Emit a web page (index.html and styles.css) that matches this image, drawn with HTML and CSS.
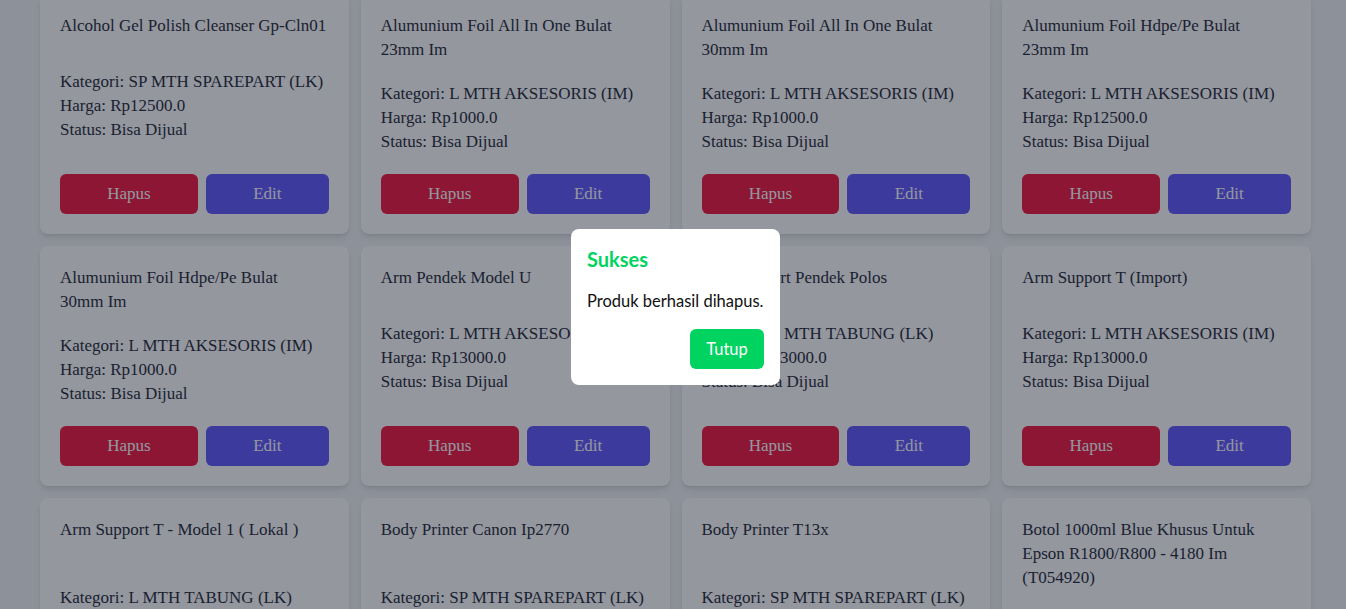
FILE: index.html
```html
<!DOCTYPE html>
<html lang="id">
<head>
<meta charset="utf-8">
<title>Produk</title>
<link rel="stylesheet" href="styles.css">
</head>
<body>
<main class="page">
  <div class="grid">
    <div class="card"><div class="title">Alcohol Gel Polish Cleanser Gp-Cln01</div><div class="info"><p>Kategori: SP MTH SPAREPART (LK)</p><p>Harga: Rp12500.0</p><p>Status: Bisa Dijual</p></div><div class="actions"><button class="btn btn-del">Hapus</button><button class="btn btn-edit">Edit</button></div></div>
    <div class="card"><div class="title">Alumunium Foil All In One Bulat 23mm&nbsp;Im</div><div class="info"><p>Kategori: L MTH AKSESORIS (IM)</p><p>Harga: Rp1000.0</p><p>Status: Bisa Dijual</p></div><div class="actions"><button class="btn btn-del">Hapus</button><button class="btn btn-edit">Edit</button></div></div>
    <div class="card"><div class="title">Alumunium Foil All In One Bulat 30mm&nbsp;Im</div><div class="info"><p>Kategori: L MTH AKSESORIS (IM)</p><p>Harga: Rp1000.0</p><p>Status: Bisa Dijual</p></div><div class="actions"><button class="btn btn-del">Hapus</button><button class="btn btn-edit">Edit</button></div></div>
    <div class="card"><div class="title">Alumunium Foil Hdpe/Pe Bulat 23mm&nbsp;Im</div><div class="info"><p>Kategori: L MTH AKSESORIS (IM)</p><p>Harga: Rp12500.0</p><p>Status: Bisa Dijual</p></div><div class="actions"><button class="btn btn-del">Hapus</button><button class="btn btn-edit">Edit</button></div></div>

    <div class="card"><div class="title">Alumunium Foil Hdpe/Pe Bulat 30mm&nbsp;Im</div><div class="info"><p>Kategori: L MTH AKSESORIS (IM)</p><p>Harga: Rp1000.0</p><p>Status: Bisa Dijual</p></div><div class="actions"><button class="btn btn-del">Hapus</button><button class="btn btn-edit">Edit</button></div></div>
    <div class="card"><div class="title">Arm Pendek Model U</div><div class="info"><p>Kategori: L MTH AKSESORIS (IM)</p><p>Harga: Rp13000.0</p><p>Status: Bisa Dijual</p></div><div class="actions"><button class="btn btn-del">Hapus</button><button class="btn btn-edit">Edit</button></div></div>
    <div class="card"><div class="title">Arm Support Pendek Polos</div><div class="info"><p>Kategori: L MTH TABUNG (LK)</p><p>Harga: Rp13000.0</p><p>Status: Bisa Dijual</p></div><div class="actions"><button class="btn btn-del">Hapus</button><button class="btn btn-edit">Edit</button></div></div>
    <div class="card"><div class="title">Arm Support T (Import)</div><div class="info"><p>Kategori: L MTH AKSESORIS (IM)</p><p>Harga: Rp13000.0</p><p>Status: Bisa Dijual</p></div><div class="actions"><button class="btn btn-del">Hapus</button><button class="btn btn-edit">Edit</button></div></div>

    <div class="card"><div class="title">Arm Support T - Model 1 ( Lokal )</div><div class="info"><p>Kategori: L MTH TABUNG (LK)</p><p>Harga: Rp13000.0</p><p>Status: Bisa Dijual</p></div><div class="actions"><button class="btn btn-del">Hapus</button><button class="btn btn-edit">Edit</button></div></div>
    <div class="card"><div class="title">Body Printer Canon Ip2770</div><div class="info"><p>Kategori: SP MTH SPAREPART (LK)</p><p>Harga: Rp150000.0</p><p>Status: Bisa Dijual</p></div><div class="actions"><button class="btn btn-del">Hapus</button><button class="btn btn-edit">Edit</button></div></div>
    <div class="card"><div class="title">Body Printer T13x</div><div class="info"><p>Kategori: SP MTH SPAREPART (LK)</p><p>Harga: Rp150000.0</p><p>Status: Bisa Dijual</p></div><div class="actions"><button class="btn btn-del">Hapus</button><button class="btn btn-edit">Edit</button></div></div>
    <div class="card"><div class="title">Botol 1000ml Blue Khusus Untuk Epson R1800/R800 - 4180 Im (T054920)</div><div class="info"><p>Kategori: L MTH AKSESORIS (IM)</p><p>Harga: Rp25000.0</p><p>Status: Bisa Dijual</p></div><div class="actions"><button class="btn btn-del">Hapus</button><button class="btn btn-edit">Edit</button></div></div>
  </div>
</main>

<div class="overlay">
  <div class="modal">
    <h2 class="modal-title">Sukses</h2>
    <p class="modal-text">Produk berhasil dihapus.</p>
    <div class="modal-actions"><button class="modal-btn">Tutup</button></div>
  </div>
</div>
</body>
</html>
```

FILE: styles.css
```css
* { box-sizing: border-box; }

html, body {
  margin: 0;
  padding: 0;
}

body {
  background: #f3f4f6;
  font-family: "Liberation Serif", serif;
  color: #1f2937;
  overflow: hidden;
  height: 609px;
}

.page {
  padding: 0 35px 0 40px;
}

.grid {
  display: grid;
  grid-template-columns: repeat(4, 1fr);
  gap: 12px;
  margin-top: -6px;
}

.card {
  background: #ffffff;
  border-radius: 8px;
  box-shadow: 0 4px 6px -1px rgba(0, 0, 0, 0.1), 0 2px 4px -2px rgba(0, 0, 0, 0.1);
  padding: 20px;
  display: flex;
  flex-direction: column;
  justify-content: space-between;
  gap: 20px;
  font-size: 17px;
  line-height: 24px;
}

.title {
  margin: 0;
}

.info p {
  margin: 0;
}

.actions {
  display: flex;
  gap: 8px;
}

.btn {
  flex: 1 1 auto;
  height: 40px;
  border: none;
  border-radius: 6px;
  color: #ffffff;
  font-family: "Liberation Serif", serif;
  font-size: 17px;
  padding: 0 16px;
}

.btn-del { background: #f0143e; }
.btn-edit { background: #6156ff; }

.overlay {
  position: fixed;
  inset: 0;
  background: rgba(17, 24, 39, 0.45);
  display: flex;
  align-items: center;
  justify-content: center;
  padding: 5px 0 0 5px;
}

.modal {
  width: 209px;
  background: #ffffff;
  border-radius: 8px;
  padding: 16px;
  font-family: "Lato", "Noto Sans", sans-serif;
  color: #111111;
}

.modal-title {
  margin: 0 0 16px;
  font-size: 20px;
  line-height: 28px;
  font-weight: 700;
  color: #00d35f;
}

.modal-text {
  margin: 0 0 16px;
  font-size: 16.5px;
  line-height: 24px;
  white-space: nowrap;
}

.modal-actions {
  display: flex;
  justify-content: flex-end;
}

.modal-btn {
  height: 40px;
  width: 74px;
  border: none;
  border-radius: 6px;
  background: #00d35f;
  color: #ffffff;
  font-family: "Lato", "Noto Sans", sans-serif;
  font-size: 16.5px;
}
```
